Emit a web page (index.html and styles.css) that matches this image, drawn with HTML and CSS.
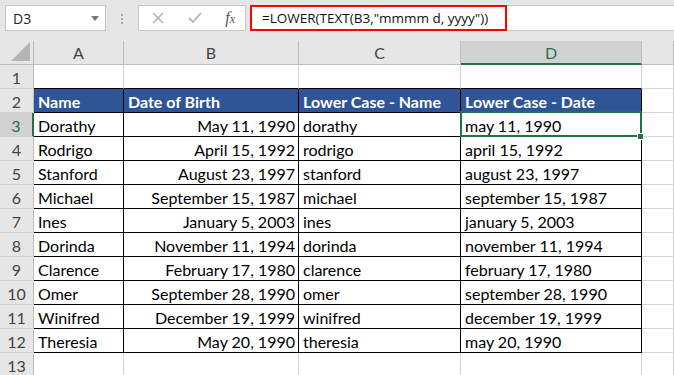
FILE: index.html
```html
<!DOCTYPE html>
<html lang="en">
<head>
    <meta charset="UTF-8">
    <title>LOWER TEXT dates</title>
    <link rel="stylesheet" href="styles.css">
</head>
<body>
    <div class="topbar">
        <div class="namebox">
            <span>D3</span>
            <svg class="caret" width="8" height="5" viewBox="0 0 8 5"><path d="M0 0h8L4 5z" fill="#777"/></svg>
        </div>
        <div class="grip"><i></i><i></i><i></i></div>
        <div class="fxbuttons">
            <svg width="12" height="12" viewBox="0 0 12 12"><path d="M1 1l10 10M11 1L1 11" stroke="#b4b4b4" stroke-width="1.6" fill="none"/></svg>
            <svg width="14" height="12" viewBox="0 0 14 12"><path d="M1 6l4 4 8-9" stroke="#b4b4b4" stroke-width="1.8" fill="none"/></svg>
            <span class="fx"><i>f</i><i class="sub">x</i></span>
        </div>
        <div class="formula">
            <div class="formula-text">=LOWER(TEXT(B3,"mmmm d, yyyy"))</div>
        </div>
    </div>

    <div class="sheet">
        <div class="corner"><svg width="20" height="20" viewBox="0 0 20 20"><path d="M19 0V19H0z" fill="#b4b4b4"/></svg></div>
        <div class="colhead">A</div>
        <div class="colhead">B</div>
        <div class="colhead">C</div>
        <div class="colhead active">D</div>
        <div class="colhead"></div>

        <div class="rowhead">1</div>
        <div class="cell top"></div><div class="cell top"></div><div class="cell top"></div><div class="cell top"></div><div class="cell"></div>

        <div class="rowhead">2</div>
        <div class="cell th">Name</div>
        <div class="cell th">Date of Birth</div>
        <div class="cell th">Lower Case - Name</div>
        <div class="cell th">Lower Case - Date</div>
        <div class="cell"></div>

        <div class="rowhead active">3</div>
        <div class="cell td">Dorathy</div>
        <div class="cell td num">May 11, 1990</div>
        <div class="cell td">dorathy</div>
        <div class="cell td selected">may 11, 1990</div>
        <div class="cell"></div>

        <div class="rowhead">4</div>
        <div class="cell td">Rodrigo</div>
        <div class="cell td num">April 15, 1992</div>
        <div class="cell td">rodrigo</div>
        <div class="cell td">april 15, 1992</div>
        <div class="cell"></div>

        <div class="rowhead">5</div>
        <div class="cell td">Stanford</div>
        <div class="cell td num">August 23, 1997</div>
        <div class="cell td">stanford</div>
        <div class="cell td">august 23, 1997</div>
        <div class="cell"></div>

        <div class="rowhead">6</div>
        <div class="cell td">Michael</div>
        <div class="cell td num">September 15, 1987</div>
        <div class="cell td">michael</div>
        <div class="cell td">september 15, 1987</div>
        <div class="cell"></div>

        <div class="rowhead">7</div>
        <div class="cell td">Ines</div>
        <div class="cell td num">January 5, 2003</div>
        <div class="cell td">ines</div>
        <div class="cell td">january 5, 2003</div>
        <div class="cell"></div>

        <div class="rowhead">8</div>
        <div class="cell td">Dorinda</div>
        <div class="cell td num">November 11, 1994</div>
        <div class="cell td">dorinda</div>
        <div class="cell td">november 11, 1994</div>
        <div class="cell"></div>

        <div class="rowhead">9</div>
        <div class="cell td">Clarence</div>
        <div class="cell td num">February 17, 1980</div>
        <div class="cell td">clarence</div>
        <div class="cell td">february 17, 1980</div>
        <div class="cell"></div>

        <div class="rowhead">10</div>
        <div class="cell td">Omer</div>
        <div class="cell td num">September 28, 1990</div>
        <div class="cell td">omer</div>
        <div class="cell td">september 28, 1990</div>
        <div class="cell"></div>

        <div class="rowhead">11</div>
        <div class="cell td">Winifred</div>
        <div class="cell td num">December 19, 1999</div>
        <div class="cell td">winifred</div>
        <div class="cell td">december 19, 1999</div>
        <div class="cell"></div>

        <div class="rowhead">12</div>
        <div class="cell td">Theresia</div>
        <div class="cell td num">May 20, 1990</div>
        <div class="cell td">theresia</div>
        <div class="cell td">may 20, 1990</div>
        <div class="cell"></div>

        <div class="rowhead">13</div>
        <div class="cell"></div><div class="cell"></div><div class="cell"></div><div class="cell"></div><div class="cell"></div>
    </div>
</body>
</html>
```

FILE: styles.css
```css
body { margin: 0; background: #fff; font-family: Lato, "Open Sans", sans-serif; overflow: hidden; }

.topbar { display: flex; align-items: flex-start; height: 41px; padding: 5px 0 0 5px; box-sizing: border-box; background: #e6e6e6; font-family: "Open Sans", "Noto Sans", sans-serif; }
.namebox { display: flex; align-items: center; justify-content: space-between; width: 101px; height: 26px; box-sizing: border-box; padding: 0 6px 0 7px; background: #fff; border: 1px solid #c6c6c6; font-size: 14px; color: #222; }
.grip { display: flex; flex-direction: column; gap: 2px; margin: 9px 0 0 15px; }
.grip i { width: 2px; height: 2px; background: #a6a6a6; }
.fxbuttons { display: flex; align-items: center; justify-content: space-between; width: 108px; height: 26px; box-sizing: border-box; margin-left: 15px; padding: 0 10px 0 13px; background: #fff; border: 1px solid #c6c6c6; }
.fx { font-family: "Liberation Serif", serif; font-size: 16px; color: #555; }
.fx .sub { font-size: 12px; }
.formula { flex: 1; display: flex; height: 26px; box-sizing: border-box; margin-left: 4px; background: #fff; border-top: 1px solid #c6c6c6; border-bottom: 1px solid #c6c6c6; }
.formula-text { width: 257px; height: 26px; margin-top: -1px; box-sizing: border-box; padding: 0 0 0 10px; border: 2px solid #f00; font-size: 13.5px; line-height: 22px; color: #111; }

.sheet { display: grid; grid-template-columns: 34px 90px 175px 162px 181px 1fr; grid-auto-rows: 24px; }
.sheet > div { box-sizing: border-box; border-right: 1px solid #d4d4d4; border-bottom: 1px solid #d4d4d4; display: flex; align-items: center; white-space: nowrap; overflow: hidden; }

.corner, .colhead, .rowhead { background: #e6e6e6; color: #444; font-size: 16px; }
.sheet > .corner { align-items: flex-end; justify-content: flex-end; padding: 0 2px 2px 0; border-right-color: #bdbdbd; border-bottom-color: #bdbdbd; }
.sheet > .colhead { justify-content: center; border-right-color: #bdbdbd; border-bottom-color: #bdbdbd; }
.sheet > .rowhead { justify-content: center; padding-top: 2px; border-right-color: #bdbdbd; border-bottom-color: #d0d0d0; }
.sheet > .colhead.active { background: #d2d2d2; color: #217346; border-bottom: 2px solid #217346; }
.sheet > .rowhead.active { background: #d2d2d2; color: #217346; border-right: 2px solid #217346; }

.cell { font-size: 16px; color: #000; padding: 2px 4px 0; }
.sheet > .top { border-bottom-color: #000; }
.sheet > .th { background: #2f5597; color: #fff; font-weight: bold; border-right-color: #000; border-bottom-color: #000; }
.sheet > .td { border-right-color: #000; border-bottom-color: #000; }
.sheet > .num { justify-content: flex-end; padding-right: 3px; }

.sheet > .selected { position: relative; overflow: visible; }
.selected::after { content: ""; position: absolute; top: -2px; left: -1px; right: -1px; bottom: -1px; border: 2px solid #217346; }
.selected::before { content: ""; position: absolute; right: -3px; bottom: -4px; width: 5px; height: 5px; background: #217346; border: 1px solid #fff; z-index: 1; }
```
